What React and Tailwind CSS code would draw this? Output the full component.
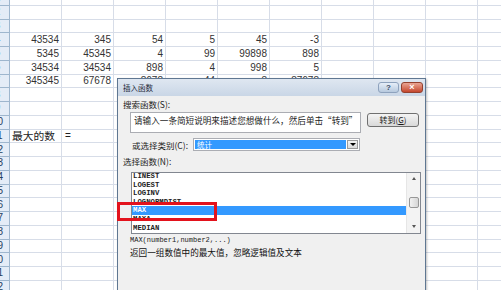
import React from "react";

const DATA = {
  4: ["43534", "345", "54", "5", "45", "-3"],
  5: ["5345", "45345", "4", "99", "99898", "898"],
  6: ["34534", "34534", "898", "4", "998", "5"],
  7: ["345345", "67678", "8678", "44", "8", "87678"],
};

const LIST = ["LINEST", "LOGEST", "LOGINV", "LOGNORMDIST", "MAX", "MAXA", "MEDIAN"];

function Row({ n }) {
  const vals = DATA[n];
  return (
    <div className="flex h-[13.75px]">
      <div className="w-[24px] -ml-[14px] shrink-0 bg-[#e4ecf7] border-r border-b border-[#9eb6ce] flex items-center justify-center text-[10px] text-[#27415f] leading-none">
        {n}
      </div>
      {Array.from({ length: 10 }).map((_, i) => {
        let content = null;
        if (vals && i < 6) {
          content = (
            <div className="w-full h-full flex items-center justify-end pr-[2px] text-[10px] text-[#333]">{vals[i]}</div>
          );
        }
        if (n === 11 && i === 0) {
          content = (
            <div className="h-full flex items-center pl-[2px] whitespace-nowrap text-[10.75px] text-[#222]" style={{ fontFamily: '"Noto Sans CJK SC", sans-serif' }}>
              最大的数
            </div>
          );
        }
        if (n === 11 && i === 1) {
          content = <div className="h-full flex items-center pl-[3px] text-[10px] text-[#222]">=</div>;
        }
        return (
          <div key={i} className="w-[52px] shrink-0 border-r border-b border-[#d7dde8] overflow-visible relative">
            {content}
          </div>
        );
      })}
    </div>
  );
}

export default function App() {
  const rows = Array.from({ length: 23 }, (_, i) => i + 1);
  const cjk = { fontFamily: '"Noto Sans CJK SC", "Liberation Sans", sans-serif' };
  const mono = { fontFamily: '"Liberation Mono", "DejaVu Sans Mono", monospace' };
  return (
    <div className="relative w-[501px] h-[290px] overflow-hidden bg-white" style={{ fontFamily: '"Liberation Sans", sans-serif' }}>
      <div className="-mt-[8px]">
        {rows.map((r) => (
          <Row key={r} n={r} />
        ))}
      </div>

      {/* dialog window */}
      <div className="absolute left-[117px] top-[78px] w-[309px] h-[230px] border border-[#5f7792] bg-[#f0f0f0] shadow-[1px_1px_2px_rgba(0,0,0,0.25)]" style={cjk}>
        <div className="h-[17px] flex items-center justify-between pl-[5px] pr-[2px] bg-gradient-to-b from-[#dfe7f1] to-[#c9d6e6]">
          <span className="text-[7.5px] text-[#1e2a3a] leading-none">插入函数</span>
          <div className="flex gap-[2px] items-center">
            <div className="w-[21px] h-[11px] rounded-[3px] border border-[#8ea2bd] bg-gradient-to-b from-[#e6eef8] to-[#b7c9de] flex items-center justify-center text-[8px] leading-none font-bold text-[#3b4c63]" style={{ fontFamily: '"Liberation Sans", sans-serif' }}>
              ?
            </div>
            <div className="w-[22px] h-[11px] rounded-[3px] border border-[#93412f] bg-gradient-to-b from-[#e9a493] to-[#c4452c] flex items-center justify-center text-[9px] leading-none font-bold text-white" style={{ fontFamily: '"Liberation Sans", sans-serif' }}>
              ×
            </div>
          </div>
        </div>

        <div className="px-[5px] relative">
          <div className="mt-[3px] h-[10px] leading-[10px] text-[8.5px] text-[#1a1a1a] whitespace-nowrap">搜索函数(S):</div>

          <div className="mt-[3px] ml-[7px] flex items-start">
            <div className="w-[231px] h-[21px] border border-[#abadb3] bg-white pl-[3px] pt-[2px] text-[8.6px] leading-[10px] text-[#222] whitespace-nowrap overflow-hidden">
              请输入一条简短说明来描述您想做什么，然后单击“转到”
            </div>
            <div className="ml-[6px] mt-[1px] w-[52px] h-[14px] rounded-[3px] border border-[#707070] bg-gradient-to-b from-[#f4f4f4] to-[#d9d9d9] flex items-center justify-center text-[8px] leading-none text-[#1a1a1a] whitespace-nowrap">
              转到(<span className="underline">G</span>)
            </div>
          </div>

          <div className="mt-[5px] ml-[9px] flex items-center">
            <div className="w-[61px] text-[8.5px] leading-[10px] text-[#1a1a1a] whitespace-nowrap">或选择类别(C):</div>
            <div className="w-[167px] h-[13px] border border-[#abadb3] bg-white flex items-stretch p-[1px]">
              <div className="flex-1 bg-[#3399ff] text-white text-[7.5px] leading-[9px] pl-[2px]">统计</div>
              <div className="w-[11px] ml-[1px] border border-[#9a9a9a] bg-gradient-to-b from-[#f4f4f4] to-[#dadada] flex items-center justify-center">
                <div className="w-0 h-0 border-l-[3px] border-r-[3px] border-t-[3px] border-l-transparent border-r-transparent border-t-black" />
              </div>
            </div>
          </div>

          <div className="mt-[5px] h-[10px] leading-[10px] text-[8.5px] text-[#1a1a1a] whitespace-nowrap">选择函数(N):</div>

          <div className="mt-[6px] ml-[8px] w-[290px] h-[62px] border border-[#828790] bg-white flex overflow-hidden">
            <div className="flex-1 overflow-hidden">
              <div className="-mt-[1px]">
                {LIST.map((f) => (
                  <div
                    key={f}
                    className={`h-[8.6px] leading-[8.6px] pl-[1px] text-[7.3px] font-bold ${f === "MAX" ? "bg-[#3399ff] text-white" : "text-[#222]"}`}
                    style={mono}
                  >
                    {f}
                  </div>
                ))}
              </div>
            </div>
            <div className="w-[14px] bg-[#f3f3f3] border-l border-[#e6e6e6] flex flex-col items-center">
              <div className="mt-[4px] w-0 h-0 border-l-[2.5px] border-r-[2.5px] border-b-[3px] border-l-transparent border-r-transparent border-b-[#555]" />
              <div className="mt-[17px] w-[10px] h-[11px] rounded-[2px] border border-[#979797] bg-gradient-to-r from-[#f2f2f2] to-[#d6d6d6]" />
              <div className="mt-auto mb-[5px] w-0 h-0 border-l-[2.5px] border-r-[2.5px] border-t-[3px] border-l-transparent border-r-transparent border-t-[#555]" />
            </div>
          </div>

          <div className="mt-[2px] ml-[7px] h-[9px] leading-[9px] text-[7px] text-[#222] whitespace-nowrap" style={mono}>
            MAX(number1,number2,...)
          </div>
          <div className="mt-[2px] ml-[7px] h-[11px] leading-[11px] text-[8.6px] text-[#111] whitespace-nowrap">
            返回一组数值中的最大值，忽略逻辑值及文本
          </div>
        </div>

        {/* red annotation rectangle */}
        <div className="absolute left-[-1px] top-[123px] w-[100px] h-[19px] border-[3px] border-[#e3121c]" />
      </div>
    </div>
  );
}
